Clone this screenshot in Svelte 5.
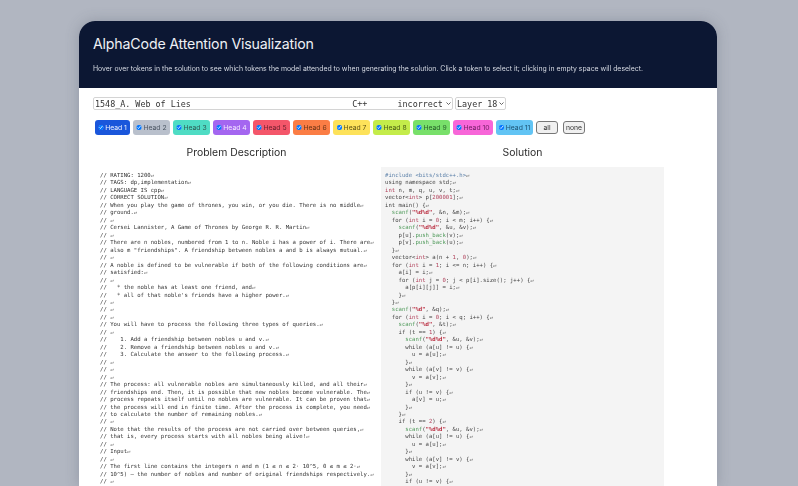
<script>
  const heads = [
    ['Head 1', '#1a56db', '#f2f5ff', 35],
    ['Head 2', '#b9c0cc', '#4b5563', 37],
    ['Head 3', '#4fdcc4', '#2f5a55', 37],
    ['Head 4', '#a466f0', '#f3e8ff', 37],
    ['Head 5', '#f4566a', '#6a1f2c', 37],
    ['Head 6', '#fb7d45', '#6a3316', 37],
    ['Head 7', '#fde25a', '#5f5314', 37],
    ['Head 8', '#c4ec4a', '#4a5c14', 37],
    ['Head 9', '#78e06a', '#27602a', 37],
    ['Head 10', '#f766d8', '#6d1c60', 40],
    ['Head 11', '#62c4f4', '#1c5272', 37]
  ]

  const problem = `// RATING: 1200
// TAGS: dp,implementation
// LANGUAGE IS cpp
// CORRECT SOLUTION
// When you play the game of thrones, you win, or you die. There is no middle
// ground.
// 
// Cersei Lannister, A Game of Thrones by George R. R. Martin
// 
// There are n nobles, numbered from 1 to n. Noble i has a power of i. There are
// also m "friendships". A friendship between nobles a and b is always mutual.
// 
// A noble is defined to be vulnerable if both of the following conditions are
// satisfied:
// 
//   * the noble has at least one friend, and
//   * all of that noble's friends have a higher power.
// 
// 
// 
// You will have to process the following three types of queries.
// 
//    1. Add a friendship between nobles u and v.
//    2. Remove a friendship between nobles u and v.
//    3. Calculate the answer to the following process.
// 
// 
// 
// The process: all vulnerable nobles are simultaneously killed, and all their
// friendships end. Then, it is possible that new nobles become vulnerable. The
// process repeats itself until no nobles are vulnerable. It can be proven that
// the process will end in finite time. After the process is complete, you need
// to calculate the number of remaining nobles.
// 
// Note that the results of the process are not carried over between queries,
// that is, every process starts with all nobles being alive!
// 
// Input
// 
// The first line contains the integers n and m (1 ≤ n ≤ 2· 10^5, 0 ≤ m ≤ 2·
// 10^5) — the number of nobles and number of original friendships respectively.
// `.split('\n')

  const solution = `#include <bits/stdc++.h>
using namespace std;
int n, m, q, u, v, t;
vector<int> p[200001];
int main() {
  scanf("%d%d", &n, &m);
  for (int i = 0; i < m; i++) {
    scanf("%d%d", &u, &v);
    p[u].push_back(v);
    p[v].push_back(u);
  }
  vector<int> a(n + 1, 0);
  for (int i = 1; i <= n; i++) {
    a[i] = i;
    for (int j = 0; j < p[i].size(); j++) {
      a[p[i][j]] = i;
    }
  }
  scanf("%d", &q);
  for (int i = 0; i < q; i++) {
    scanf("%d", &t);
    if (t == 1) {
      scanf("%d%d", &u, &v);
      while (a[u] != u) {
        u = a[u];
      }
      while (a[v] != v) {
        v = a[v];
      }
      if (u != v) {
        a[v] = u;
      }
    }
    if (t == 2) {
      scanf("%d%d", &u, &v);
      while (a[u] != u) {
        u = a[u];
      }
      while (a[v] != v) {
        v = a[v];
      }
      if (u != v) {`.split('\n')

  // rough syntax colouring, enough for the small code panel
  function tokens(line) {
    if (line.startsWith('#')) return [{ text: line, cls: 'meta' }]
    const re = /("[^"]*")|(\bscanf\b|\bpush_back\b)|(\bint\b(?! main))|(\b\d+\b)/g
    const out = []
    let last = 0
    let m
    while ((m = re.exec(line))) {
      if (m.index > last) out.push({ text: line.slice(last, m.index), cls: '' })
      const cls = m[1] ? 'str' : m[2] ? 'fn' : m[3] ? 'kw' : 'num'
      out.push({ text: m[0], cls })
      last = m.index + m[0].length
    }
    if (last < line.length) out.push({ text: line.slice(last), cls: '' })
    return out
  }

  const pad = (s, n) => s + '\u00a0'.repeat(n - s.length)
  const problemLabel = pad('1548_A. Web of Lies', 51) + pad('C++', 9) + 'incorrect'
</script>

<div class="card">
  <header class="banner">
    <h1>AlphaCode Attention Visualization</h1>
    <p>Hover over tokens in the solution to see which tokens the model attended to when generating the solution. Click a token to select it; clicking in empty space will deselect.</p>
  </header>

  <div class="controls">
    <div class="selects">
      <select class="problem"><option>{problemLabel}</option></select>
      <select class="layer"><option>Layer 18</option></select>
    </div>

    <div class="heads">
      {#each heads as [label, bg, fg, width]}
        <label class="head" style="background: {bg}; color: {fg}; width: {width}px">
          <input type="checkbox" checked />{label}
        </label>
      {/each}
      <button class="toggle all">all</button>
      <button class="toggle none">none</button>
    </div>
  </div>

  <div class="columns">
    <section class="left">
      <h2>Problem Description</h2>
      <div class="text">
        {#each problem as line}
          <div class="line">{line}<span class="ret">↵</span></div>
        {/each}
      </div>
    </section>
    <section class="right">
      <h2>Solution</h2>
      <div class="text code">
        {#each solution as line}
          <div class="line">{#each tokens(line) as t}<span class={t.cls}>{t.text}</span>{/each}<span class="ret">↵</span></div>
        {/each}
      </div>
    </section>
  </div>
</div>

<style>
:global(body) {
  background: #b1b6c1;
  overflow: hidden;
  height: 486px;
}

.card {
  box-sizing: border-box;
  width: 638px;
  height: 465px;
  margin: 21px 0 0 79px;
  border-radius: 16px 16px 0 0;
  background: #fff;
  overflow: hidden;
  box-shadow: 0 0 14px rgba(70, 76, 92, 0.28);
  font-family: "Inter", sans-serif;
  filter: blur(0.45px);
}

.banner {
  height: 67px;
  box-sizing: border-box;
  padding: 14px 14px 0;
  background: #0c1733;
  color: #eef0f5;
}

.banner h1 {
  margin: 0;
  font-size: 14.2px;
  line-height: 18px;
  font-weight: 400;
  letter-spacing: -0.18px;
}

.banner p {
  margin: 10.5px 0 0;
  font-size: 6.9px;
  line-height: 10px;
  color: #d5d9e2;
  will-change: transform;
}

.controls {
  padding: 9px 14px 0;
}

.selects {
  display: flex;
  gap: 2px;
}

select {
  appearance: none;
  height: 13px;
  box-sizing: border-box;
  padding: 0 0 0 1px;
  border: 1px solid #d4d4d4;
  border-radius: 2px;
  background: #fff url("data:image/svg+xml,%3Csvg xmlns='http://www.w3.org/2000/svg' width='5' height='3'%3E%3Cpath d='M.5.5l2 2 2-2' fill='none' stroke='%23555' stroke-width='.9'/%3E%3C/svg%3E") no-repeat right 1px center;
  color: #333;
  font-family: "DejaVu Sans Mono", monospace;
  font-size: 8.4px;
}

.problem {
  width: 360px;
}

.layer {
  width: 51px;
}

.heads {
  display: flex;
  align-items: center;
  gap: 3px;
  margin: 10px 0 0 2px;
}

.head {
  display: flex;
  align-items: center;
  justify-content: center;
  gap: 1.5px;
  height: 15px;
  border-radius: 3px;
  font-size: 6.8px;
  white-space: nowrap;
}

.head input {
  width: 5.5px;
  height: 5.5px;
  margin: 0;
}

.toggle {
  height: 13px;
  padding: 0;
  border: 1px solid #777;
  border-radius: 3px;
  background: #f0f0f0;
  color: #333;
  font-family: inherit;
  font-size: 6.8px;
}

.all {
  width: 22px;
}

.none {
  width: 22px;
  margin-left: 2px;
}

.columns {
  display: flex;
  gap: 2px;
  padding-left: 15px;
}

.left {
  flex: 0 0 285px;
}

.right {
  flex: 0 0 283px;
}

h2 {
  margin: 11px 0 0;
  font-size: 10.4px;
  line-height: 14px;
  font-weight: 400;
  text-align: center;
  color: #2b2b2b;
}

.text {
  margin-top: 7px;
  padding: 5px 4px;
  font-family: "DejaVu Sans Mono", monospace;
  font-size: 5.62px;
  line-height: 7.47px;
  color: #333;
  white-space: pre;
}

.left .text {
  padding-left: 6px;
}

.code {
  background: #f4f4f4;
  color: #444;
}

.line {
  height: 7.47px;
}

.ret {
  color: #666;
}

.meta {
  color: #5a7fa8;
}

.kw,
.num {
  color: #b0405a;
}

.str {
  color: #b8283c;
  font-weight: 700;
}

.fn {
  color: #4f9a5a;
}
</style>
